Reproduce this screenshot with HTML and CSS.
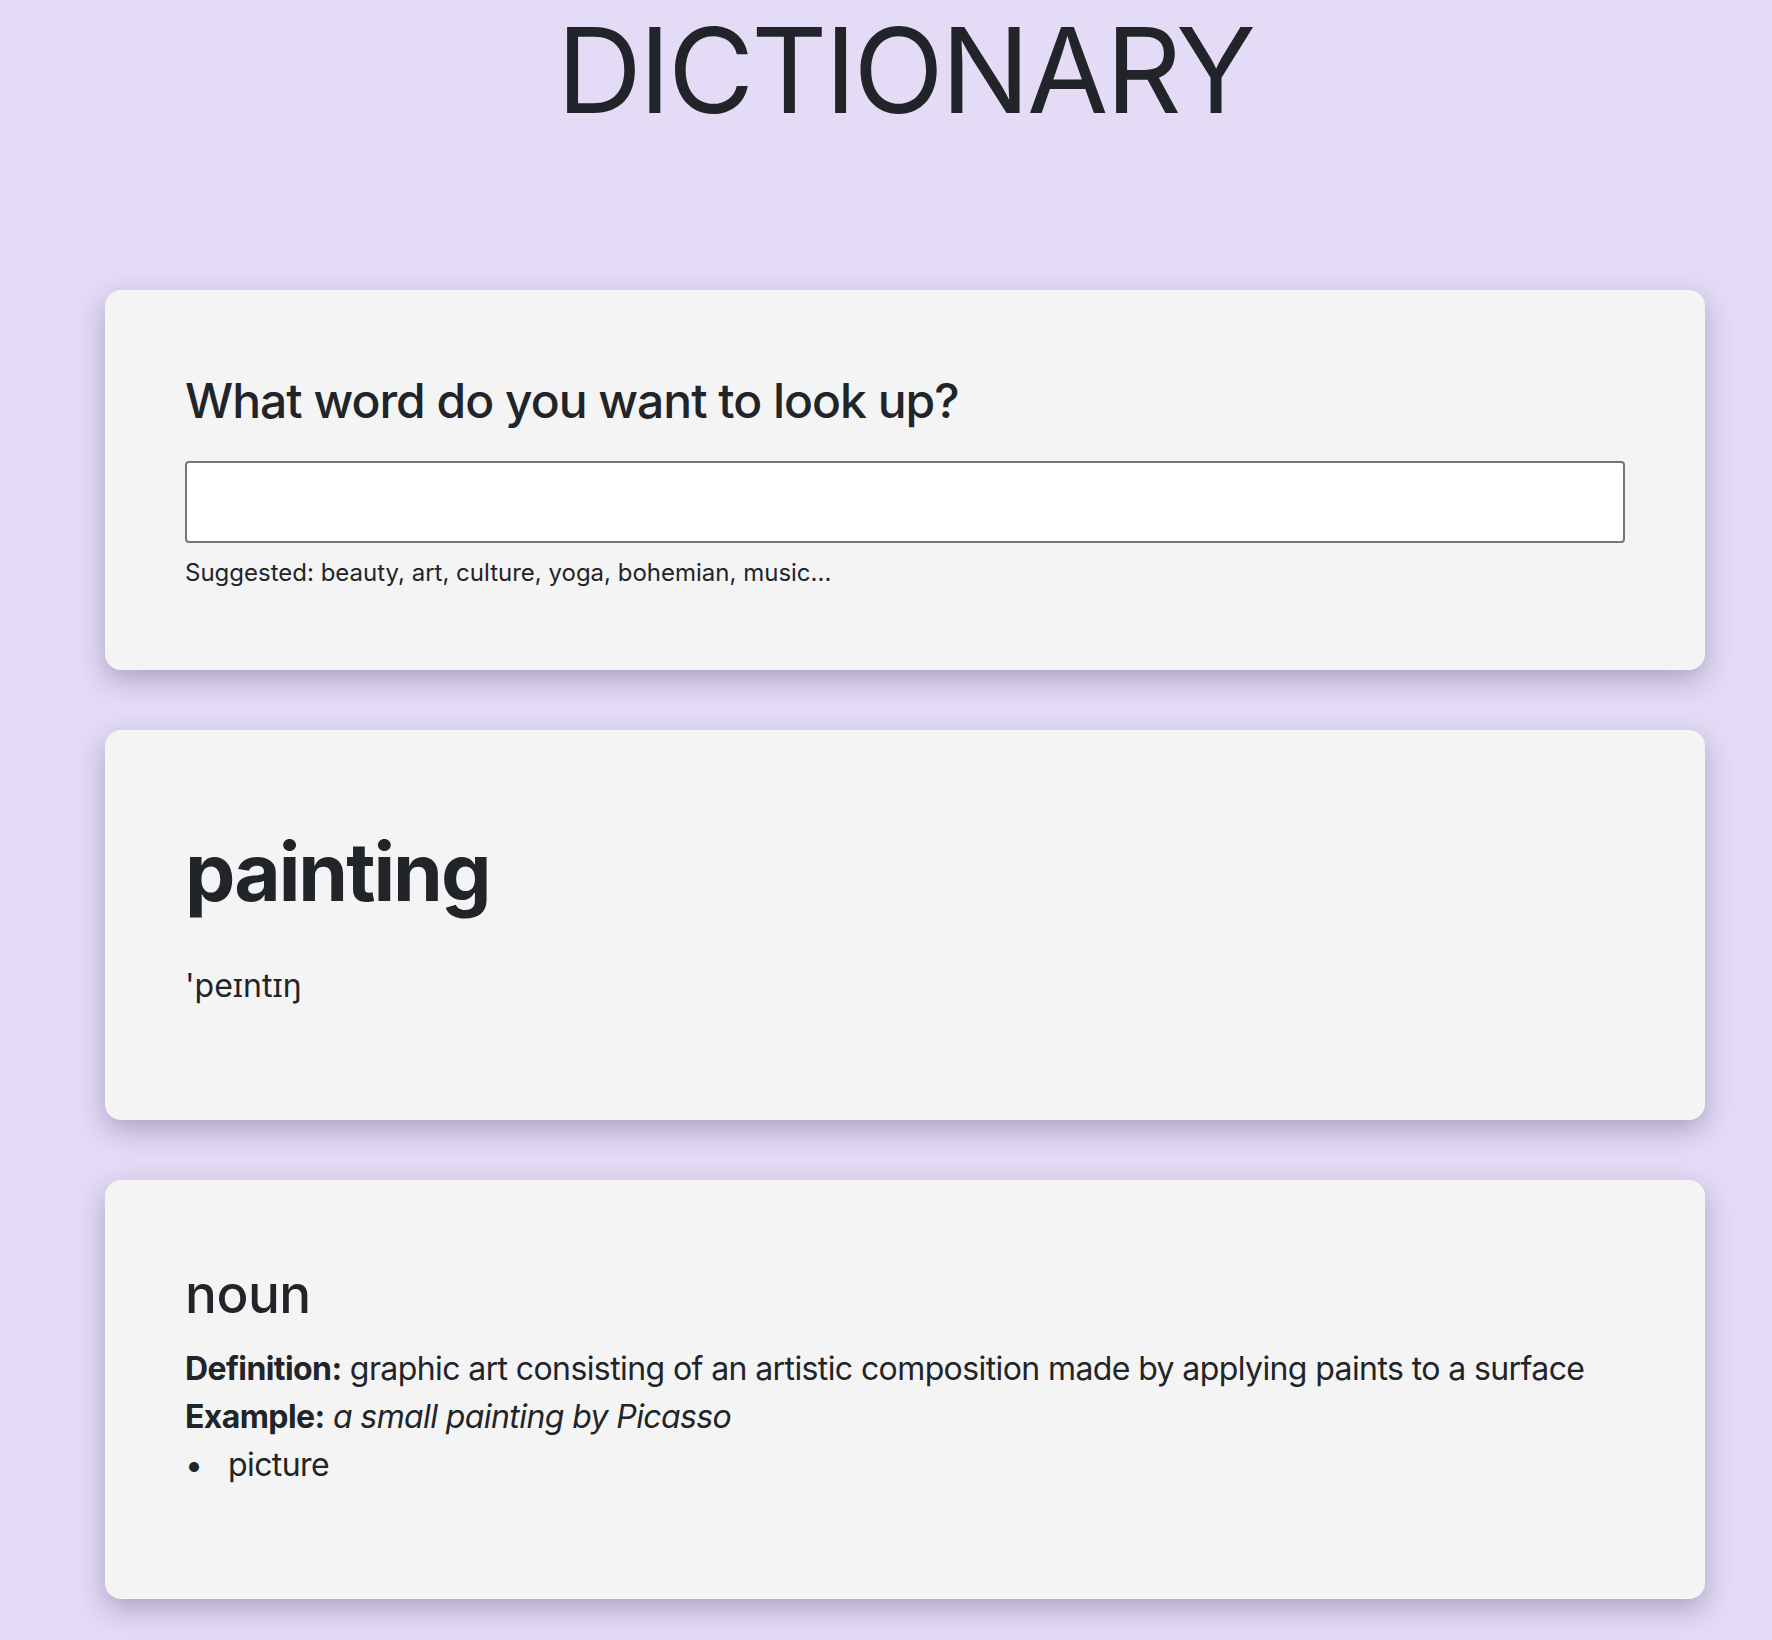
FILE: index.html
```html
<!DOCTYPE html>
<html lang="en">
<head>
<meta charset="utf-8">
<title>Dictionary</title>
<link rel="stylesheet" href="styles.css">
</head>
<body>
<div class="container">
  <h1 class="title">DICTIONARY</h1>

  <section class="card search-card">
    <h2 class="question">What word do you want to look up?</h2>
    <input class="search-input" type="search" aria-label="Search word">
    <p class="hint">Suggested: beauty, art, culture, yoga, bohemian, music...</p>
  </section>

  <section class="card word-card">
    <h1 class="word">painting</h1>
    <p class="phonetic">'peɪntɪŋ</p>
  </section>

  <section class="card meaning-card">
    <h3 class="part">noun</h3>
    <div class="definition"><strong>Definition:</strong> graphic art consisting of an artistic composition made by applying paints to a surface</div>
    <div class="example"><strong>Example:</strong> <em>a small painting by Picasso</em></div>
    <ul class="synonyms">
      <li>picture</li>
    </ul>
  </section>
</div>
</body>
</html>
```

FILE: styles.css
```css
html, body {
  margin: 0;
  padding: 0;
}

body {
  background: #e4dcf6;
  color: #212529;
  font-family: Inter, "Noto Sans", "DejaVu Sans", sans-serif;
  font-size: 32px;
  line-height: 1.5;
  letter-spacing: -0.6px;
}

.container {
  width: 1600px;
  margin-left: 105px;
  padding-bottom: 40px;
}

.title {
  margin: 11px 0 161px;
  font-size: 118px;
  font-weight: 400;
  line-height: 1;
  text-align: center;
  letter-spacing: -2.8px;
}

.card {
  background: #f4f4f4;
  border-radius: 16px;
  padding: 80px;
  margin-bottom: 60px;
  box-shadow: 0 10px 28px rgba(40, 30, 70, 0.3);
}

.question {
  margin: 2px 0 31px;
  font-size: 48px;
  font-weight: 500;
  line-height: 1.2;
  letter-spacing: -1px;
}

.search-input {
  display: block;
  box-sizing: border-box;
  width: 100%;
  height: 82px;
  margin: 0;
  border: 2px solid #767676;
  border-radius: 4px;
  background: #fff;
  font: inherit;
  padding: 0 16px;
}

.hint {
  margin: 12px 0 -1px;
  font-size: 24px;
  line-height: 1.5;
  letter-spacing: 0;
}

.word {
  margin: 14px 0 42px;
  font-size: 80px;
  font-weight: 700;
  line-height: 1.2;
  letter-spacing: -2px;
}

.phonetic {
  margin: 0 0 30px;
  letter-spacing: 0;
}

.part {
  margin: 3px 0 19px;
  font-size: 53px;
  font-weight: 500;
  line-height: 1.2;
  letter-spacing: -0.5px;
}

.definition strong,
.example strong {
  font-weight: 700;
}

.synonyms {
  list-style: none;
  margin: 0 0 30px;
  padding: 0;
}

.synonyms li {
  display: flex;
}

.synonyms li::before {
  content: "•";
  width: 43px;
  flex: none;
}
```
